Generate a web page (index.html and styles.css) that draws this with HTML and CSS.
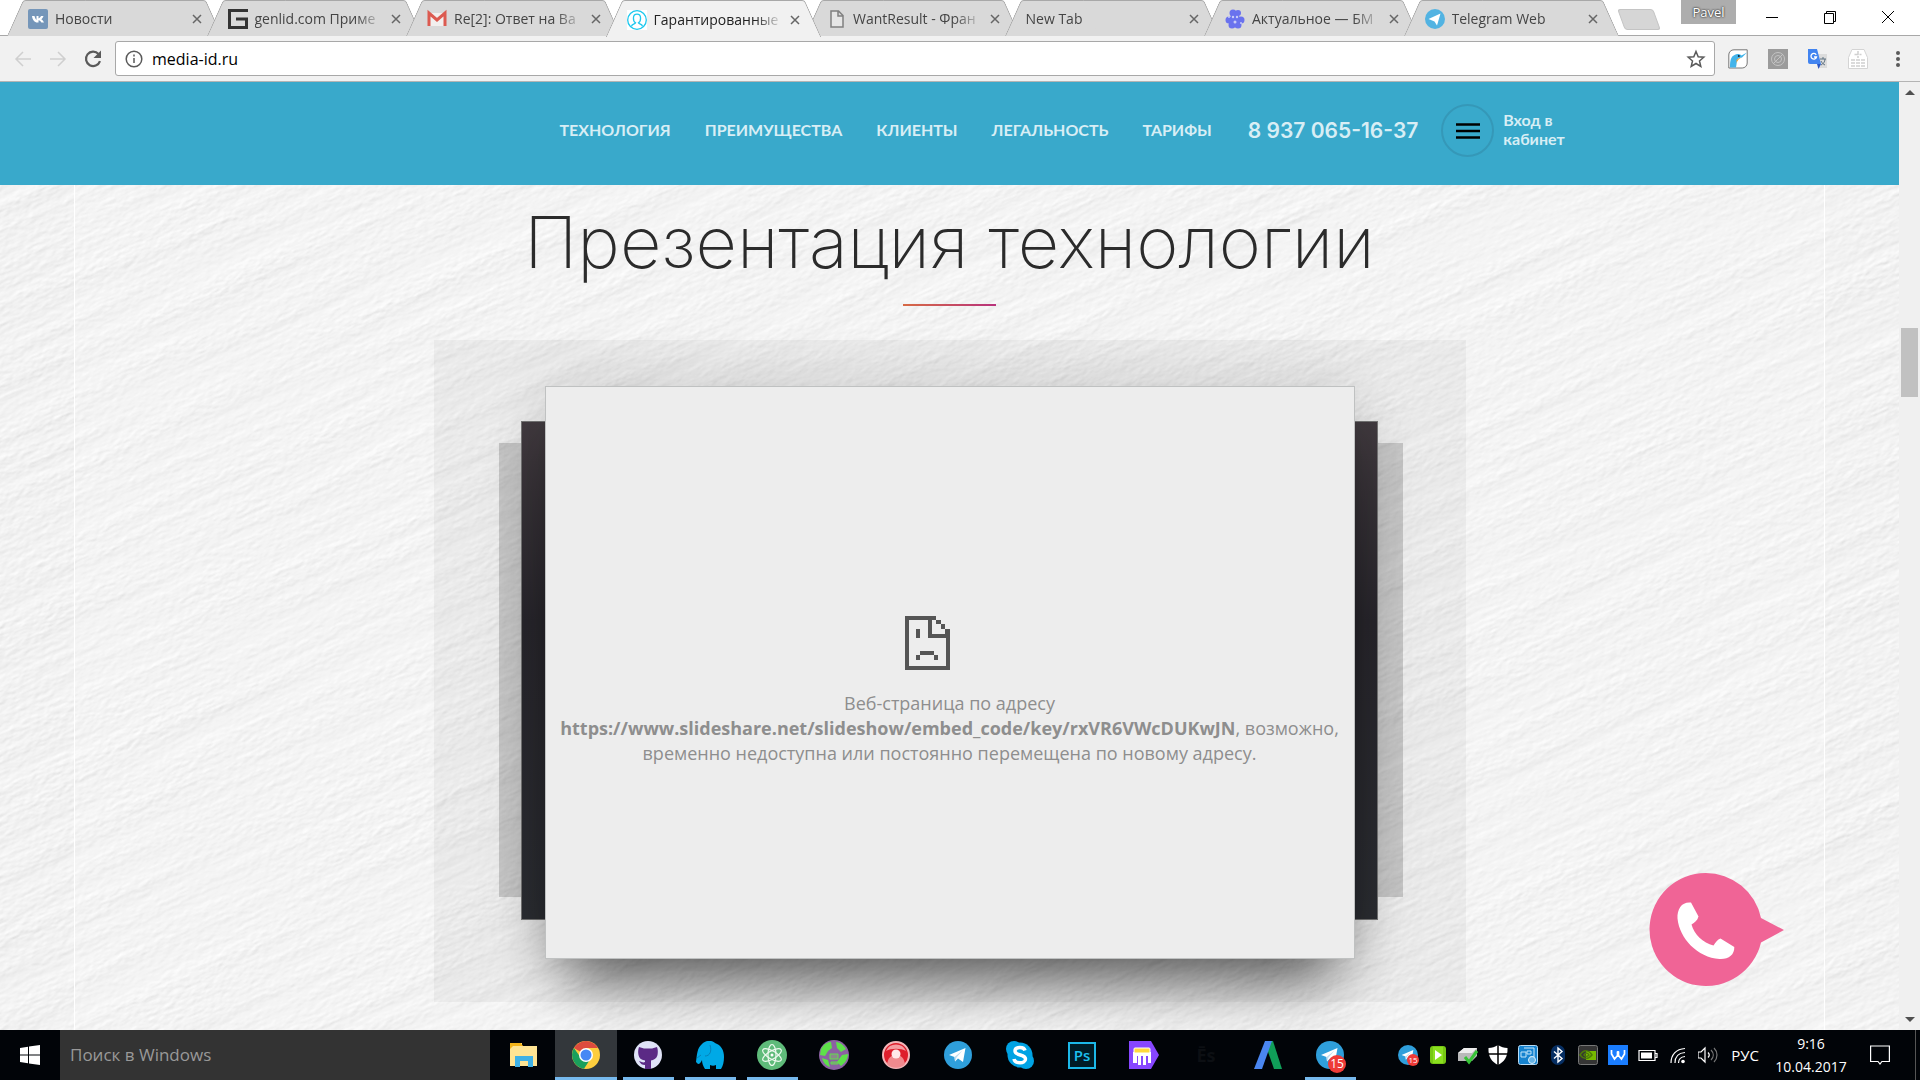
FILE: index.html
```html
<!DOCTYPE html>
<html lang="ru">
<head>
<meta charset="utf-8">
<title>Гарантированные</title>
<link rel="stylesheet" href="styles.css">
</head>
<body>
<svg class="defs" aria-hidden="true">
  <defs>
    <filter id="plaster" x="0" y="0" width="100%" height="100%" color-interpolation-filters="sRGB">
      <feTurbulence type="fractalNoise" baseFrequency="0.004 0.045" numOctaves="4" seed="8" result="streaks"/>
      <feTurbulence type="fractalNoise" baseFrequency="0.12 0.25" numOctaves="2" seed="3" result="grain"/>
      <feComposite in="streaks" in2="grain" operator="arithmetic" k1="0.5" k2="0.6" k3="0.1" k4="0"/>
      <feDiffuseLighting surfaceScale="0.6" diffuseConstant="1.030" lighting-color="#ffffff">
        <feDistantLight azimuth="250" elevation="67"/>
      </feDiffuseLighting>
    </filter>
    <symbol id="telegram" viewBox="0 0 28 28">
      <circle cx="14" cy="14" r="14" fill="#2f9fdb"/>
      <path d="M5 14 21.500 7 19 21l-5-3.500-3 3-.500-4.500z" fill="#fff"/>
      <path d="m10.500 16 8-6.500-6 7-1.500 4z" fill="#bcdcf0"/>
    </symbol>
  </defs>
</svg>

<div class="browser">
  <header class="tabstrip">
    <div class="tabs">
      <div class="tab">
        <svg class="fav" viewBox="0 0 20 20"><rect width="20" height="20" rx="2" fill="#7596b9"/><path d="M4 7h2.500c.5 2 1.200 3.300 2 4V7h2v2.500C11.600 9.200 12.500 8 13 7h2.500c-.5 1.500-1.300 2.500-2.300 3.300 1.200.7 2.200 1.700 2.800 3.200h-2.600c-.6-1.100-1.500-1.900-2.900-2.200v2.200H9.500C6.500 13.500 4.500 11 4 7z" fill="#fff"/></svg>
        <span class="title">Новости</span><button class="x" aria-label="Закрыть"><svg viewBox="0 0 10 10"><path d="m1 1 8 8M9 1 1 9"/></svg></button>
      </div>
      <div class="tab">
        <svg class="fav" viewBox="0 0 20 20"><path d="M20 1.500H1.500v17h17V10H8" fill="none" stroke="#333" stroke-width="3"/></svg>
        <span class="title">genlid.com Приме</span><button class="x" aria-label="Закрыть"><svg viewBox="0 0 10 10"><path d="m1 1 8 8M9 1 1 9"/></svg></button>
      </div>
      <div class="tab">
        <svg class="fav" viewBox="0 0 20 20"><path d="M1 4h18v13H1z" fill="#f2efee"/><path d="M2 17V4l8 7 8-7v13" fill="none" stroke="#dc5a50" stroke-width="3"/></svg>
        <span class="title">Re[2]: Ответ на Ва</span><button class="x" aria-label="Закрыть"><svg viewBox="0 0 10 10"><path d="m1 1 8 8M9 1 1 9"/></svg></button>
      </div>
      <div class="tab active">
        <svg class="fav" viewBox="0 0 20 20"><path d="M0 0h20v20H0z" fill="#fff"/><g fill="none" stroke="#1cc8ee" stroke-width="1.300"><circle cx="10" cy="10" r="9.300"/><path d="M10 4.200c-5 0-4 7-1.500 8.600-1 1.700-3.500 1-4 3.500M10 4.200c5 0 4 7 1.500 8.600 1 1.700 3.500 1 4 3.500"/></g></svg>
        <span class="title">Гарантированные</span><button class="x" aria-label="Закрыть"><svg viewBox="0 0 10 10"><path d="m1 1 8 8M9 1 1 9"/></svg></button>
      </div>
      <div class="tab">
        <svg class="fav" viewBox="0 0 20 20"><path d="M5 2h7.500L17 6.500V18H5zM12 2v5h5" fill="#e6e6e6" stroke="#808080" stroke-width="1.500"/></svg>
        <span class="title">WantResult - Фран</span><button class="x" aria-label="Закрыть"><svg viewBox="0 0 10 10"><path d="m1 1 8 8M9 1 1 9"/></svg></button>
      </div>
      <div class="tab"><span class="title">New Tab</span><button class="x" aria-label="Закрыть"><svg viewBox="0 0 10 10"><path d="m1 1 8 8M9 1 1 9"/></svg></button></div>
      <div class="tab">
        <svg class="fav" viewBox="0 0 20 20"><g fill="#6a72ee"><circle cx="8" cy="4" r="3.500"/><circle cx="13" cy="4" r="3"/><circle cx="4" cy="11" r="3.500"/><circle cx="16" cy="11" r="3.500"/><circle cx="7" cy="16" r="3.500"/><circle cx="13" cy="16" r="3.500"/><circle cx="10" cy="10" r="5"/></g><g fill="#c9ccf8"><circle cx="8" cy="8" r="1.200"/><circle cx="12" cy="8" r="1.200"/><circle cx="10" cy="13" r="1.500"/><circle cx="4" cy="8" r="1"/><circle cx="16" cy="14" r="1"/></g></svg>
        <span class="title">Актуальное — БМ</span><button class="x" aria-label="Закрыть"><svg viewBox="0 0 10 10"><path d="m1 1 8 8M9 1 1 9"/></svg></button>
      </div>
      <div class="tab">
        <svg class="fav" viewBox="0 0 20 20"><circle cx="10" cy="10" r="10" fill="#52b3e2"/><path d="m3.500 10 12-5.500-3.500 12-2.500-4z" fill="#fff"/></svg>
        <span class="title">Telegram Web</span><button class="x" aria-label="Закрыть"><svg viewBox="0 0 10 10"><path d="m1 1 8 8M9 1 1 9"/></svg></button>
      </div>
    </div>
    <button class="newtab" aria-label="Новая вкладка"></button>
    <button class="profile">Pavel</button>
    <div class="winctl">
      <button aria-label="Свернуть"><svg viewBox="0 0 14 14"><path d="M1 7.500h12"/></svg></button>
      <button aria-label="Восстановить"><svg viewBox="0 0 14 14"><path d="M1.500 3.500h9v10h-9zM3.500 3.500v-2h9v10h-2"/></svg></button>
      <button aria-label="Закрыть окно"><svg viewBox="0 0 14 14"><path d="m1 1 12 12M13 1 1 13"/></svg></button>
    </div>
  </header>

  <div class="toolbar">
    <button class="tool off" aria-label="Назад"><svg viewBox="0 0 20 20"><path d="M18 10H3m7-7-7 7 7 7"/></svg></button>
    <button class="tool off" aria-label="Вперёд"><svg viewBox="0 0 20 20"><path d="M2 10h15m-7-7 7 7-7 7"/></svg></button>
    <button class="tool" aria-label="Обновить"><svg viewBox="0 0 20 20"><path d="M15.500 5A7.200 7.200 0 1 0 17 12.200" stroke-width="2.200"/><path d="M18 1.500V9h-7.500z" fill="#5a5a5a" stroke="none"/></svg></button>
    <div class="omnibox">
      <svg class="info" viewBox="0 0 20 20"><circle cx="10" cy="10" r="7.800"/><path d="M10 9v5M10 5.500v2"/></svg>
      <input class="url" type="text" value="media-id.ru" aria-label="Адрес">
      <button class="star" aria-label="В закладки"><svg viewBox="0 0 20 20"><path d="m10 2.500 2.200 5.200 5.600.5-4.300 3.700 1.300 5.500L10 14.500l-4.800 2.900 1.300-5.500-4.300-3.700 5.600-.5z"/></svg></button>
    </div>
    <div class="exts">
      <button aria-label="Колибри"><svg viewBox="0 0 20 20"><path d="M6 .8h13.200V14a5 5 0 0 1-5 5H.8V6A5 5 0 0 1 6 .8z" fill="#fff" stroke="#777"/><path d="M2 18.500C2 11 3 7.500 6.500 6 9 4.500 12 5 13.500 6.500L19 3.500l-5 5C12 9 9.500 9 9 12l-1 6.500z" fill="#43b4ea"/><path d="M8.500 11c2-2 3-2 4.500-2.300-2 1.300-3.500 2.300-4.500 5.300z" fill="#f3a02c"/><circle cx="10.800" cy="7" r="1" fill="#123"/></svg></button>
      <button aria-label="Расширение"><svg viewBox="0 0 20 20"><path d="M0 0h20v20H0z" fill="#9b9b9b"/><g fill="none" stroke="#c4c4c4"><circle cx="10" cy="10" r="6.500"/><circle cx="10" cy="10" r="3.500"/><path d="m5 15 10-10"/></g></svg></button>
      <button aria-label="Переводчик"><svg viewBox="0 0 20 20"><path d="M8 5h11v14h-9z" fill="#dcdcdc"/><path d="M12 10h6M15 8v2m2 0c0 3-2 5-4 6m0-4c1 2 2 3 4 4" fill="none" stroke="#5c7080"/><path d="M0 0h9l4 15H2a2 2 0 0 1-2-2z" fill="#4284f0"/><path d="m9 15h4l-2.500 5z" fill="#2a56c6"/><path d="M8.200 5.800A2.800 2.800 0 1 0 8.500 8H6" fill="none" stroke="#fff" stroke-width="1.300"/></svg></button>
      <button aria-label="Корзина"><svg viewBox="0 0 20 20"><path d="M4 .5h12l3.500 8v11H.5v-11z" fill="#fff" stroke="#d4d4d4"/><path d="M10 2v7M6.500 5.500h7M3 11h14M3 14h14M3 17h14" stroke="#d0d0d0" stroke-width="1.500" stroke-dasharray="4 1"/></svg></button>
      <button aria-label="Меню"><svg viewBox="0 0 20 20" fill="#5a5a5a"><circle cx="10" cy="4" r="2"/><circle cx="10" cy="10" r="2"/><circle cx="10" cy="16" r="2"/></svg></button>
    </div>
  </div>

  <div class="viewport">
    <main class="page">
      <div class="topbar">
        <div class="wrap">
          <nav class="menu">
            <a href="#tech">ТЕХНОЛОГИЯ</a><a href="#adv">ПРЕИМУЩЕСТВА</a><a href="#clients">КЛИЕНТЫ</a><a href="#legal">ЛЕГАЛЬНОСТЬ</a><a href="#price">ТАРИФЫ</a>
          </nav>
          <a class="phone" href="tel:89370651637">8 937 065-16-37</a>
          <button class="burger" aria-label="Меню"><svg viewBox="0 0 24 16"><path d="M0 1.500h24M0 8h24M0 14.500h24"/></svg></button>
          <a class="login" href="#login">Вход в<br>кабинет</a>
        </div>
      </div>
      <section class="deck" id="tech">
        <svg class="texture" viewBox="0 0 1900 846" preserveAspectRatio="xMidYMid slice" aria-hidden="true">
          <g transform="rotate(-24 950 423)"><rect x="-200" y="-500" width="2300" height="1850" filter="url(#plaster)"/></g>
        </svg>
        <div class="inner">
          <h1>Презентация технологии</h1>
          <div class="rule"></div>
          <div class="stage">
            <div class="layer back"></div>
            <div class="layer mid"></div>
            <div class="frame">
              <svg class="sad" viewBox="0 0 45 54"><path d="M0 0h31v4H4v46h37V22H23V4h4v14h18v36H0z"/><path d="M31 4h5v4h-5zM36 8h4v5h-4zM40 13h5v5h-5zM11 13h4v9h-4zM15 35h14v4H15zM11 39h4v5h-4zM29 39h4v5h-4z"/></svg>
              <p>Веб-страница по адресу<br><b>https://www.slideshare.net/slideshow/embed_code/key/rxVR6VWcDUKwJN</b>, возможно,<br>временно недоступна или постоянно перемещена по новому адресу.</p>
            </div>
          </div>
        </div>
        <button class="callback" aria-label="Заказать звонок"><svg viewBox="0 0 136 114"><path d="M56.500 0a56.500 56.500 0 0 1 55.500 45l23 12-23 12.500A56.500 56.500 0 1 1 56.500 0z" fill="#f06496"/><path d="M42 29.500c-9-1-14 6-13.500 16 2 20 20 39 42 40.500 9 .5 15-4 14.800-12L71.500 65.500c-3 1-5 4-7 7C54 70 45 61 42.500 51.500c3-2 6-4 7-8z" fill="#fff"/></svg></button>
      </section>
    </main>
    <div class="scroll" aria-hidden="true"><i class="up"></i><i class="thumb"></i><i class="down"></i></div>
  </div>
</div>

<footer class="taskbar">
  <button class="start" aria-label="Пуск"><svg viewBox="0 0 20 20" fill="#fff"><path d="M0 3l8-1.200V9.500H0zM9 1.600 20 0v9.500H9zM0 10.500h8v7.700L0 17zM9 10.500h11V20L9 18.400z"/></svg></button>
  <input class="search" type="text" placeholder="Поиск в Windows" aria-label="Поиск в Windows">
  <div class="apps">
    <button aria-label="Проводник"><svg viewBox="0 0 28 28"><path d="M0 2h12v3h15v20H0z" fill="#ffe493"/><path d="M0 2h11l2 3H3l-3 3z" fill="#f4b41a"/><path d="M5 15h18v11h-5v-6h-8v6H5z" fill="#3fb1e6"/></svg></button>
    <button class="current" aria-label="Chrome"><svg viewBox="0 0 28 28"><circle cx="14" cy="14" r="14" fill="#fdcd3e"/><path d="M14 14 1.900 7A14 14 0 0 1 26.100 7H14z" fill="#dd4b3e"/><path d="M1.900 7A14 14 0 0 0 12 27.800L19 17H9z" fill="#1a9f5c"/><circle cx="14" cy="14" r="7" fill="#fff"/><circle cx="14" cy="14" r="5.500" fill="#4688f4"/></svg></button>
    <button class="open" aria-label="GitHub"><svg viewBox="0 0 28 28"><circle cx="14" cy="14" r="14" fill="#dfe3f7"/><path d="M5 6l5 1.500h8L23 6c1 3 1 5 .5 8-1 4-4 5-6.500 5.500V28h-6v-4c-3 0-4-1-6-4 3 1 4 2 6 1v-1.500C7 19 5 17 4.500 14 4 11 4 9 5 6z" fill="#5b2a85"/></svg></button>
    <button class="open" aria-label="Слон"><svg viewBox="0 0 28 28"><path d="M6 3c4-4 10-4 13-1 6 2 9 7 9 14 0 5-1 9-3 12h-5v-4c-2 1-4 1-6 0v4H9c-2-3-3-6-3-9-1 2-2 4-4 4l-2-2C1 14 1 7 6 3z" fill="#00a9e6"/><path d="M14 4c2 6 0 11-5 11M1 17l4-3" fill="none" stroke="#0781b8"/></svg></button>
    <button class="open" aria-label="Atom"><svg class="big" viewBox="0 0 30 30"><circle cx="15" cy="15" r="15" fill="#5fbb7a"/><g fill="none" stroke="#eefaf0" stroke-width="1.200"><ellipse cx="15" cy="15" rx="4" ry="10.500"/><ellipse cx="15" cy="15" rx="4" ry="10.500" transform="rotate(60 15 15)"/><ellipse cx="15" cy="15" rx="4" ry="10.500" transform="rotate(120 15 15)"/></g><circle cx="15" cy="15" r="1.500" fill="#fff"/></svg></button>
    <button aria-label="Сеть"><svg class="big" viewBox="0 0 30 30"><circle cx="15" cy="15" r="15" fill="#8c61a3"/><path d="M2 9c3-5 6-7 10-7l1 6-4 3-3 5-5-1zM17 2c5 0 8 4 10 7l-5 3-4-4zM3 18l6 2 2 7c-4-1-7-5-8-9zM23 15l6-1c0 5-3 9-7 12l-4-4z" fill="#5ee04a"/><path d="M11 14h8v5h-8zM12 22h7v2h-7z" fill="#8a8a8a" stroke="#5ee04a"/></svg></button>
    <button aria-label="Запись"><svg viewBox="0 0 28 28"><circle cx="14" cy="14" r="13" fill="#de1e2c" stroke="#f2b6b9" stroke-width="2"/><path d="M4 10a11 11 0 0 1 20 0c-5-3-15-3-20 0z" fill="#f59ca0"/><path d="M5 23c1-6 4-9 9-9s8 3 9 9c-4 5-14 5-18 0z" fill="#f08a8e"/><circle cx="14" cy="13" r="4.500" fill="#ffe9e9"/></svg></button>
    <button aria-label="Telegram"><svg viewBox="0 0 28 28"><use href="#telegram"/></svg></button>
    <button aria-label="Skype"><svg viewBox="0 0 28 28"><circle cx="14" cy="14" r="12.500" fill="#00a3e4"/><circle cx="8" cy="8" r="8" fill="#00a3e4"/><circle cx="20" cy="20" r="8" fill="#00a3e4"/><path d="M19 9.500C18 5.500 9 5.500 9 10c0 5 10.500 3 10.500 8 0 5-10.500 5-11.500 0" fill="none" stroke="#fff" stroke-width="3.500"/></svg></button>
    <button aria-label="Photoshop"><span class="ps">Ps</span></button>
    <button aria-label="Заметки"><svg class="big" viewBox="0 0 30 30"><path d="M0 1h22l8 14-8 14H0z" fill="#8746ff"/><path d="M4 12h18v11h-3v-7h-2v9h-3v-9h-2v9H9v-9H8v7H4z" fill="#fff"/><rect x="5" y="8" width="16" height="5" rx="1" fill="#ffd83d" stroke="#fff"/></svg></button>
    <button aria-label="Es"><span class="es">Ēs</span></button>
    <button aria-label="AdWords"><svg viewBox="0 0 28 28"><path d="M13 0h6l9 28h-8l-7-20z" fill="#109d58"/><path d="M11 0h7L8 28H0z" fill="#4a86f0"/></svg></button>
    <button class="open" aria-label="Telegram, 15 сообщений"><svg viewBox="0 0 28 28"><use href="#telegram"/></svg><span class="badge">15</span></button>
  </div>
  <div class="tray">
    <span class="ti"><svg viewBox="0 0 20 20"><use href="#telegram"/></svg><em class="mini">15</em></span>
    <span class="ti"><svg viewBox="0 0 20 20"><rect x="2" y="1" width="16" height="18" rx="3" fill="#77c814"/><path d="M5 2h10v16H5z" fill="#8be01f"/><path d="m7 5 7 5-7 5z" fill="#fff"/></svg></span>
    <span class="ti"><svg viewBox="0 0 20 20"><path d="M0 8 6 3h13v8l-5 5H0z" fill="#b9b9b9"/><path d="m0 8 6-5h13l-5 5z" fill="#ededed"/><path d="m7 12 4 5 8-11" fill="none" stroke="#36c436" stroke-width="3"/></svg></span>
    <span class="ti"><svg viewBox="0 0 20 20"><path d="M10 0c3 2 6 3 9.500 3C20 12 16 17 10 20 4 17 0 12 .5 3 4 3 7 2 10 0z" fill="#fff"/><path d="M10 0v20M0 9h20" stroke="#000" stroke-width="1.500"/></svg></span>
    <span class="ti"><svg viewBox="0 0 20 20"><rect x=".5" y=".5" width="19" height="19" rx="2" fill="#1683cf" stroke="#b8dcf5"/><path d="M3 7h5v5H3zM6 3h10v9h-4M9 6h4v3H9z" fill="none" stroke="#c5e6fa"/><circle cx="14" cy="15" r="3.500" fill="#67b4e6" stroke="#d9effb"/></svg></span>
    <span class="ti"><svg viewBox="0 0 20 20"><rect x="3" width="14" height="20" rx="7" fill="#062e62"/><path d="m6 6.500 8 7-4 3.500V3l4 3.500-8 7" fill="none" stroke="#fff" stroke-width="1.400"/></svg></span>
    <span class="ti"><svg viewBox="0 0 20 20"><rect x=".5" y=".5" width="19" height="19" rx="2" fill="#353535" stroke="#777"/><path d="M8 6h10v9H8z" fill="#77b900"/><path d="M2 10c4-6 9-5 12 0-4 5-9 4-12 0zm4 0c2-3 4-2 5 0-2 2-3 2-5 0z" fill="none" stroke="#4c7a08" stroke-width="1.500"/></svg></span>
    <span class="ti"><svg viewBox="0 0 20 20"><path d="M0 0h20v20H0z" fill="#1a7dff"/><path d="M3.500 5v4l3 5 3-3.500V6.500m1 0v4l3 3.500 3-5V5M10 6v5" fill="none" stroke="#fff" stroke-width="1.700"/></svg></span>
    <span class="ti"><svg viewBox="0 0 20 20"><path d="M1 5.500h16v10H1zM17 8.500h2v4h-2z" fill="none" stroke="#fff" stroke-width="1.200"/><path d="M3 7.500h11v6H3z" fill="#fff"/></svg></span>
    <span class="ti"><svg viewBox="0 0 20 20"><g fill="none" stroke="#fff" stroke-width="1.200"><path d="M3 18C3 10 8 4 17 3.500M7 18c0-6 3-10 10-10.500M10.500 18c0-3.500 2-6 6.500-6.500" /></g><circle cx="15" cy="16.500" r="1.800" fill="#fff"/></svg></span>
    <span class="ti"><svg viewBox="0 0 20 20"><g fill="none" stroke="#fff" stroke-width="1.200"><path d="M0 7h3l4-4v14l-4-4H0zM10 7.500c1.500 1.500 1.500 3.500 0 5"/><path d="M13 5c3 3 3 7 0 10M16 3c4 4 4 10 0 14" stroke="#777"/></g></svg></span>
    <span class="lang">РУС</span>
    <time class="clock" datetime="2017-04-10T09:16">9:16<br>10.04.2017</time>
    <button class="notes" aria-label="Уведомления"><svg viewBox="0 0 20 20"><path d="M.600 1h18.800v15.500h-7.500L10 19l-2-2.500H.600z" fill="none" stroke="#fff" stroke-width="1.200"/></svg></button>
  </div>
</footer>
</body>
</html>
```
FILE: styles.css
```css
* { box-sizing: border-box; }
body {
  margin: 0;
  height: 100vh;
  display: flex;
  flex-direction: column;
  overflow: hidden;
  font-family: "Open Sans", "Noto Sans", sans-serif;
  color: #333;
}
button { border: 0; padding: 0; background: none; font: inherit; color: inherit; }
a { color: inherit; text-decoration: none; }
.defs { position: absolute; width: 0; height: 0; }
.browser { flex: 1; min-height: 0; display: flex; flex-direction: column; }

/* tab strip */
.tabstrip { display: flex; height: 36px; background: #fff; border-bottom: 1px solid #a8a8a8; }
.tabs { flex: 1; min-width: 0; display: flex; padding-left: 7px; }
.tab {
  position: relative;
  flex: 1 1 0;
  min-width: 0;
  height: 35px;
  display: flex;
  align-items: center;
  gap: 7px;
  padding: 3px 21px 0 21px;
  font-size: 14px;
  line-height: 20px;
  color: #444;
}
.tab + .tab { margin-left: -16px; }
.tab::before, .tab::after {
  content: "";
  position: absolute;
  top: 0;
  height: 35px;
  background: #d9d9d9;
  border-top: 1px solid #a8a8a8;
}
.tab::before { left: 8px; right: 50%; transform: skewX(-24deg); border-left: 1px solid #a0a0a0; border-top-left-radius: 3px; }
.tab::after { right: 8px; left: 40%; transform: skewX(24deg); border-right: 1px solid #a0a0a0; border-top-right-radius: 3px; }
.tab > * { position: relative; z-index: 1; }
.tab.active { z-index: 2; height: 36px; color: #222; }
.tab.active::before, .tab.active::after { background: #f1f1f1; height: 36px; }
.fav { width: 20px; height: 20px; flex: none; }
.title {
  flex: 1;
  min-width: 0;
  overflow: hidden;
  white-space: nowrap;
  mask-image: linear-gradient(to right, #000 calc(100% - 28px), transparent);
}
.x { width: 10px; height: 10px; display: flex; }
.x svg { width: 10px; height: 10px; stroke: #666; stroke-width: 1.500; }
.newtab {
  width: 36px;
  height: 21px;
  margin: 9px 24px 0 2px;
  background: #d6d6d6;
  border: 1px solid #c4c4c4;
  border-radius: 3px;
  transform: skewX(20deg);
}
.profile { width: 55px; height: 24px; margin-right: 7px; background: #adadad; color: #fff; font-size: 13px; line-height: 22px; text-shadow: 0 0 2px #333, 0 0 2px #333; }
.winctl { display: flex; padding-right: 3px; }
.winctl button { width: 58px; height: 34px; display: flex; align-items: center; justify-content: center; }
.winctl svg { width: 14px; height: 14px; fill: none; stroke: #000; }

/* toolbar */
.toolbar { height: 46px; display: flex; align-items: center; background: #f1f1f1; border-bottom: 1px solid #b4b4b4; padding: 0 2px 0 5px; }
.tool { width: 35px; height: 35px; display: flex; align-items: center; justify-content: center; }
.tool svg { width: 20px; height: 20px; fill: none; stroke: #5a5a5a; stroke-width: 1.500; }
.tool.off svg { stroke: #cfcfcf; }
.omnibox { flex: 1; height: 35px; margin-left: 5px; display: flex; align-items: center; background: #fff; border: 1px solid #a8a8a8; border-radius: 3px; padding: 0 8px; }
.info, .star svg { width: 20px; height: 20px; fill: none; stroke: #5a5a5a; stroke-width: 1.500; }
.url { flex: 1; min-width: 0; border: 0; outline: 0; background: none; padding: 0 8px; font: 16px/24px "Open Sans", "Noto Sans", sans-serif; color: #000; }
.star { display: flex; }
.exts { display: flex; padding-left: 3px; }
.exts button { width: 40px; height: 30px; display: flex; align-items: center; justify-content: center; }
.exts svg { width: 20px; height: 20px; }

/* page */
.viewport { flex: 1; min-height: 0; display: flex; }
.page { flex: 1; min-width: 0; display: flex; flex-direction: column; }
.topbar { background: #39a9cb; color: #d8eef5; font-family: Lato, "Open Sans", sans-serif; }
.wrap { width: 1170px; max-width: 100%; height: 103px; margin: 0 auto; padding: 0 0 6px 195px; display: flex; align-items: center; }
.menu { display: flex; gap: 34px; padding-bottom: 2px; font-size: 16px; font-weight: 700; line-height: 20px; }
.phone { margin-left: 36px; font: 600 21px/28px Inter, sans-serif; white-space: nowrap; }
.burger { flex: none; width: 53px; height: 53px; margin-left: 23px; border: 2px solid #3598b8; border-radius: 50%; display: flex; align-items: center; justify-content: center; }
.burger svg { width: 24px; height: 16px; stroke: #000; stroke-width: 2.500; }
.login { margin-left: 9px; padding-bottom: 3px; font-size: 16px; font-weight: 700; line-height: 19px; }
.deck { position: relative; flex: 1; min-height: 0; overflow: hidden; background: #f2f2f2; }
.texture { position: absolute; inset: 0; width: 100%; height: 100%; }
.inner {
  position: relative;
  height: 100%;
  margin: 0 74px;
  border: solid #fff;
  border-width: 0 1px;
  background: rgba(255, 255, 255, 0.15);
  display: flex;
  flex-direction: column;
  align-items: center;
}
h1 { margin: 15px 0 0; font: 200 72px/84px Inter, "Open Sans", sans-serif; color: #2b2b2b; white-space: nowrap; }
.rule { width: 93px; height: 2px; margin-top: 20px; background: linear-gradient(to right, #d76a45, #b8327c); }
.stage {
  position: relative;
  flex: none;
  width: 1032px;
  height: 662px;
  margin-top: 34px;
  padding-top: 46px;
  display: flex;
  justify-content: center;
  align-items: flex-start;
  background: rgba(0, 0, 0, 0.04);
}
.layer { position: absolute; }
.back { left: 65px; right: 63px; top: 103px; bottom: 105px; background: rgba(0, 0, 0, 0.16); }
.mid { left: 87px; right: 88px; top: 81px; bottom: 82px; background: linear-gradient(#423b40, #29272d 40%, #2c2e33); border: 1px solid #777; }
.frame {
  position: relative;
  width: 810px;
  height: 573px;
  padding-top: 229px;
  display: flex;
  flex-direction: column;
  align-items: center;
  background: #ededed;
  border: 1px solid #bfc1c1;
  box-shadow: 0 40px 60px -22px rgba(0, 0, 0, 0.65), 0 0 60px rgba(0, 0, 0, 0.12);
}
.sad { width: 45px; height: 54px; margin-right: 44px; fill: #555; }
.frame p { margin: 21px 0 0; font-size: 18px; line-height: 25px; text-align: center; white-space: nowrap; color: #8e8e8e; }
.callback { position: absolute; right: 114px; bottom: 43px; width: 136px; height: 114px; }
.callback svg { display: block; width: 136px; height: 114px; }
.scroll { width: 21px; display: flex; flex-direction: column; align-items: center; padding: 8px 0; background: #f0f0f0; }
.up, .down { border: 5px solid transparent; }
.up { border-top: 0; border-bottom-color: #505050; }
.down { border-bottom: 0; border-top-color: #505050; margin-top: auto; }
.thumb { width: 17px; height: 69px; margin-top: 233px; background: #c1c1c1; }

/* taskbar */
.taskbar { height: 50px; flex: none; display: flex; background: #010408; color: #fff; }
.start { width: 60px; display: flex; align-items: center; justify-content: center; }
.start svg { width: 20px; height: 20px; }
.search { width: 430px; border: 0; outline: 0; padding: 0 10px; background: #333; font: 17px/24px "Open Sans", "Noto Sans", sans-serif; color: #999; }
.search::placeholder { color: #999; opacity: 1; }
.apps { display: flex; margin-left: 3px; }
.apps button { position: relative; width: 62px; display: flex; align-items: center; justify-content: center; }
.apps svg { width: 28px; height: 28px; }
.apps .big { width: 30px; height: 30px; }
.open::after, .current::after { content: ""; position: absolute; left: 6px; right: 5px; bottom: 0; height: 3px; background: #76b9ed; }
.current::after { left: 0; right: 0; }
.apps .current { background: #33373b; }
.ps { width: 28px; height: 27px; border: 2px solid #1cb8e8; background: #001c26; color: #1cc0f0; font-size: 15px; font-weight: 600; line-height: 22px; text-align: center; }
.es { color: #0c0f13; font-size: 18px; font-weight: 700; }
.badge { position: absolute; left: 29px; top: 25px; width: 18px; height: 18px; border-radius: 50%; background: #ee3b38; color: #fff; font-size: 12px; line-height: 18px; text-align: center; }
.tray { margin-left: auto; display: flex; align-items: center; padding-right: 4px; }
.ti { position: relative; width: 30px; height: 20px; display: flex; justify-content: center; }
.ti svg { width: 20px; height: 20px; }
.mini { position: absolute; left: 14px; top: 9px; width: 12px; height: 12px; border-radius: 50%; background: #ee3b38; font-size: 8px; font-style: normal; line-height: 12px; text-align: center; }
.lang { width: 44px; font-size: 15px; text-align: center; }
.clock { width: 88px; font-size: 14px; line-height: 23px; text-align: center; }
.notes { width: 61px; height: 50px; padding-right: 10px; display: flex; align-items: center; justify-content: center; border-right: 1px solid #555; }
.notes svg { width: 20px; height: 20px; }
```
